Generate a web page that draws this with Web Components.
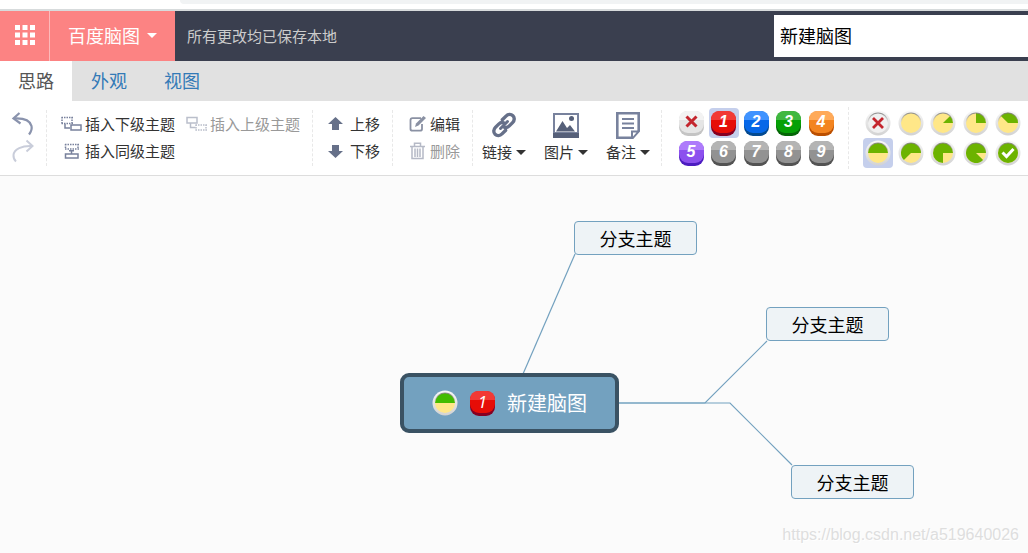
<!DOCTYPE html>
<html lang="zh-CN">
<head>
<meta charset="utf-8">
<title>百度脑图</title>
<style>
html, body { margin: 0; height: 100%; }
body { font-family: "Noto Sans CJK SC", "Liberation Sans", sans-serif; background: #fff; color: #333; }
</style>
</head>
<body>
<mind-app></mind-app>
<script>
const define = (name, render) => customElements.define(name, class extends HTMLElement {
  connectedCallback() {
    if (this.shadowRoot) return;
    const root = this.attachShadow({ mode: 'open' });
    root.innerHTML = typeof render === 'function' ? render(this) : render;
  }
});

const controls = `
  *, *::before, *::after { box-sizing: border-box; }
  button { font: inherit; color: inherit; background: none; border: 0; padding: 0; margin: 0; cursor: pointer; }
  button:disabled { cursor: default; }
`;

/* Icons: [width, height, markup] */
const icons = {
  grid: [20, 20, [0, 7.5, 15].map(y => [0, 7.5, 15].map(x => `<rect x="${x}" y="${y}" width="5" height="5" fill="#fff"/>`).join('')).join('')],
  undo: [24, 26, '<g fill="none" stroke="#8a93ad" stroke-width="2.2"><path d="M8.5 2 2.5 7.500l7 5"/><path d="M3 7.500c9-.5 16 2 17.500 7.500.6 2.500-.2 5.500-2.500 8.500"/></g>'],
  redo: [24, 26, '<g fill="none" stroke="#c9cdda" stroke-width="2"><path d="M15.500 2.500 21.500 8l-6 5.500"/><path d="M21 8C11 7.500 3 11 2.500 17c-.2 3 .8 5 2.500 6.500"/></g>'],
  child: [21, 16, '<g fill="none" stroke="#78819c" stroke-width="1.500"><path d="M.5 1.500H12M.5 7.500H12M1 1v7M11 1v7" stroke-dasharray="1.500 1"/><path d="M4 8v4h5"/><rect x="10" y="9" width="10" height="5"/></g>'],
  parent: [21, 16, '<g fill="none" stroke="#babfcb" stroke-width="1.500"><rect x="1" y="1.500" width="10" height="5.500"/><path d="M4.500 7v4.500h5"/><path d="M9.500 9H21M9.500 14H21M10 8.500v6M20 8.500v6" stroke-dasharray="1.500 1"/></g>'],
  sibling: [21, 16, '<g fill="none" stroke="#78819c" stroke-width="1.500"><path d="M4 1.500h14M4 6h14M4.500 1v5M17 1v5" stroke-dasharray="1.500 1"/><path d="M10.500 7v4M8 7.700h5"/><rect x="4.500" y="11" width="12.500" height="4"/></g>'],
  up: [15, 14, '<path d="M7.500 0 15 7h-4v6H4V7H0z" fill="#667089"/>'],
  down: [15, 14, '<path d="M7.500 14 15 7h-4V1H4v6H0z" fill="#667089"/>'],
  edit: [17, 16, '<path d="M12 2.200H3.500c-1.500 0-2 .7-2 2V13c0 1 .7 1.700 2 1.700H11c1.400 0 2-.7 2-1.700V8" fill="none" stroke="#8a91a3" stroke-width="1.800"/><path d="m6 11 1-3.500L14.500 0 17 2 9.500 9.500z" fill="#8a91a3"/>'],
  trash: [17, 18, '<g fill="none" stroke="#b5b9c6" stroke-width="1.500"><path d="M1 4.500h15M5.500 4V1.200h6V4M3 5v11.500h11V5M6 6.500v8.500M8.500 6.500v8.500M11 6.500v8.500"/></g>'],
  link: [28, 28, '<g fill="none" stroke="#667089" stroke-width="3.400" stroke-linecap="round"><path d="M12.300 8.800 16 5.100c2-2 5-2.200 6.900-.4s1.700 4.900-.3 6.900l-3.300 3.300c-1.600 1.600-3.700 1.900-5.300 1"/><path d="M15.700 19.200 12 22.900c-2 2-5 2.200-6.900.4s-1.700-4.900.3-6.900l3.300-3.300c1.600-1.600 3.700-1.900 5.300-1"/><path d="m10.500 17.500 7-7" stroke-width="3"/></g>'],
  image: [28, 28, '<rect x="1" y="2" width="26" height="25" fill="#78829d"/><rect x="3" y="4" width="22" height="17" fill="#fff"/><path d="M1 22h26v5H1z" fill="#566079"/><path d="M4 20.500 10.500 10l4.500 7 3-3 5 6.500z" fill="#566079"/><circle cx="19.500" cy="7.500" r="2.500" fill="#566079"/>'],
  note: [28, 28, '<path d="M3.300 2.300h21.400V20l-6 6.700H3.300z" fill="#fff" stroke="#78829d" stroke-width="2.600"/><path d="M17 28v-8.500h9z" fill="#78829d"/><path d="M19 21.500h3.500L19 25.500z" fill="#fff"/><path d="M8 8h12M8 12.500h12M8 17h12" stroke="#78829d" stroke-width="2"/>']
};
define('ui-icon', el => {
  const [w, h, art] = icons[el.getAttribute('name')];
  return `<style>:host{display:block;flex:none} svg{display:block}</style>
    <svg width="${w}" height="${h}" viewBox="0 0 ${w} ${h}" aria-hidden="true">${art}</svg>`;
});

define('priority-badge', el => {
  const level = Number(el.getAttribute('level'));
  const palette = [
    ['#f3f3f3', '#e5e5e5', '#c4c4c4'], ['#f23935', '#e60d07', '#850022'], ['#3f93ff', '#0768e8', '#044a91'],
    ['#40b840', '#06a006', '#046606'], ['#ffaa59', '#f38420', '#bb4f00'], ['#ae7bfb', '#8c50ee', '#4c1cc0']
  ];
  const [light, face, base] = palette[level] || ['#b4b4b4', '#929292', '#535353'];
  const mark = level === 0
    ? '<svg width="13" height="13" viewBox="0 0 13 13" aria-hidden="true"><path d="m1.500 1.500 10 10m0-10-10 10" stroke="#c4262e" stroke-width="3"/></svg>'
    : level;
  return `<style>
    :host { display: block; width: 25px; height: 25px; }
    .base { height: 100%; border-radius: 9px; background: ${base}; }
    .face { height: 22px; border-radius: 8px 8px 9px 9px; display: grid; place-items: center; color: #fff;
      background: linear-gradient(${light} 0 9px, ${face} 9px);
      font: italic var(--digit-weight, bold) 16px/22px var(--digit-font, "Liberation Sans"), sans-serif; }
    svg { display: block; }
  </style><div class="base"><div class="face">${mark}</div></div>`;
});

let serial = 0;
define('progress-badge', el => {
  const eighths = Number(el.getAttribute('eighths'));
  const green = el.getAttribute('tone') || '#6cb300';
  const id = 'rim' + serial++;
  const angle = eighths * Math.PI / 4;
  const pie = eighths === 8 ? `<circle cx="13" cy="13" r="10" fill="${green}"/>`
    : eighths > 0 ? `<path d="M13 13h10A10 10 0 ${eighths > 4 ? 1 : 0} 0 ${13 + 10 * Math.cos(angle)} ${13 - 10 * Math.sin(angle)}z" fill="${green}"/>` : '';
  const mark = el.hasAttribute('clear') ? '<path d="m8 8 10 10m0-10-10 10" stroke="#c4262e" stroke-width="2.800"/>'
    : eighths === 8 ? '<path d="m7.500 12.500 4 4 7-7.500" fill="none" stroke="#fff" stroke-width="3"/>' : '';
  return `<style>:host{display:block;width:26px;height:26px} svg{display:block}</style>
    <svg width="26" height="26" viewBox="0 0 26 26" aria-hidden="true">
      <defs><linearGradient id="${id}" x2="0" y2="1"><stop stop-color="#f8f8f8"/><stop offset="1" stop-color="#d2d2d2"/></linearGradient>
      <linearGradient id="${id}s" x2="0" y2="1"><stop stop-color="#777" stop-opacity=".8"/><stop offset=".5" stop-color="#999" stop-opacity="0"/></linearGradient></defs>
      <circle cx="13" cy="13" r="12.500" fill="url(#${id})"/>
      <circle cx="13" cy="13" r="10" fill="${el.hasAttribute('clear') ? '#f0f0f0' : '#ffe788'}"/>${pie}
      <circle cx="13" cy="13" r="10" fill="none" stroke="url(#${id}s)" stroke-width="1.200"/>${mark}
    </svg>`;
});

define('tool-group', `<style>
  :host { display: grid; flex: none; box-sizing: border-box; height: 56px; align-content: center;
    border-right: 1px dashed #e8e8e8; }
</style><slot></slot>`);

define('tool-button', el => `<style>${controls}
  :host { display: block; }
  button { display: flex; align-items: center; gap: var(--gap, 3px); height: 27px; font-size: 15px; line-height: 27px; white-space: nowrap; }
  button:disabled { color: #999; }
</style><button type="button" ${el.hasAttribute('disabled') ? 'disabled' : ''}${el.hasAttribute('hint') ? ` aria-label="${el.getAttribute('hint')}"` : ''}><ui-icon name="${el.getAttribute('icon')}"></ui-icon><slot></slot></button>`);

define('drop-button', el => `<style>${controls}
  :host { display: block; width: 62px; }
  button { width: 100%; display: grid; justify-items: center; font-size: 15px; line-height: 26px; }
  .label { display: flex; align-items: center; gap: 4px; white-space: nowrap; }
  .label::after { content: ""; border: 5px solid transparent; border-top-color: #333; border-bottom: 0; }
</style><button type="button" aria-haspopup="menu"><ui-icon name="${el.getAttribute('icon')}"></ui-icon><span class="label"><slot></slot></span></button>`);

define('badge-picker', el => {
  const priority = el.getAttribute('kind') === 'priority';
  const chosen = Number(el.getAttribute('selected'));
  const cells = Array.from({ length: 10 }, (_, i) => `<button type="button" aria-label="${priority ? '优先级' : '进度'} ${i}" aria-pressed="${i === chosen}">${
    priority ? `<priority-badge level="${i}"></priority-badge>`
      : `<progress-badge eighths="${Math.max(0, i - 1)}" ${i === 0 ? 'clear' : ''}></progress-badge>`}</button>`);
  return `<style>${controls}
    :host { display: grid; grid-template-columns: repeat(5, 30px); justify-content: space-between; width: 160px; }
    button { height: 30px; display: grid; place-items: center; border-radius: 4px; }
    button[aria-pressed="true"] { background: #c5cfec; }
  </style>${cells.join('')}`;
});

define('page-top', `<style>
  :host { display: block; height: 11px; box-sizing: border-box; border-bottom: 2px solid #d7dbdc; background: #fff; padding-left: 180px; }
  div { height: 4px; background: #f1f3f4; border-bottom-left-radius: 8px; }
</style><div></div>`);

define('app-header', `<style>${controls}
  :host { display: flex; align-items: center; height: 50px; background: #3a3f4f; color: #fff; }
  .apps, .brand { height: 100%; background: #fc8383; display: flex; align-items: center; justify-content: center; flex: none; padding-bottom: 2px; }
  .apps { width: 50px; border-right: 1px solid #fdb9b9; }
  .brand { width: 125px; gap: 7px; font-size: 18px; }
  .brand::after { content: ""; border: 5px solid transparent; border-top-color: #fff; border-bottom: 0; }
  .status { flex: 1; padding: 0 0 2px 12px; font-size: 15px; color: #ccc; white-space: nowrap; }
  input { flex: 0 0 254px; height: 42px; border: 0; border-radius: 0; padding: 0 6px 2px; font: inherit; font-size: 18px; color: #000; background: #fff; outline: 0; }
</style>
<button class="apps" type="button" aria-label="应用"><ui-icon name="grid"></ui-icon></button>
<button class="brand" type="button" aria-haspopup="menu">百度脑图</button>
<span class="status">所有更改均已保存本地</span>
<input type="text" value="新建脑图" aria-label="标题">`);

define('tab-bar', `<style>
  :host { display: flex; gap: 1px; height: 40px; background: #e1e1e1; font-size: 18px; line-height: 38px; }
  a { padding: 0 18px 2px; color: #337ab7; text-decoration: none; }
  a[aria-current] { background: #fff; color: #555; }
</style>
<a href="#idea" aria-current="page">思路</a><a href="#look">外观</a><a href="#view">视图</a>`);

define('tool-bar', `<style>
  :host { display: flex; align-items: center; height: 75px; box-sizing: border-box; border-bottom: 1px solid #ddd; background: #fff; overflow: hidden; }
  .history { padding: 0 11px 2px; }
  .insert { grid-template-columns: auto auto; column-gap: 11px; padding: 0 12px 2px 14px; }
  .move { padding: 0 12px 2px 15px; --gap: 7px; }
  .modify { padding: 0 12px 2px 16px; --gap: 4px; }
  .attach { grid-template-columns: repeat(3, auto); padding: 0 2px 0 0; }
  .priority { height: 62px; padding: 0 12px 0 14px; }
  .progress { height: 62px; padding: 0 5px 0 14px; border: 0; }
</style>
<tool-group class="history"><tool-button icon="undo" hint="撤销"></tool-button><tool-button icon="redo" hint="重做" disabled></tool-button></tool-group>
<tool-group class="insert"><tool-button icon="child">插入下级主题</tool-button><tool-button icon="parent" disabled>插入上级主题</tool-button><tool-button icon="sibling">插入同级主题</tool-button></tool-group>
<tool-group class="move"><tool-button icon="up">上移</tool-button><tool-button icon="down">下移</tool-button></tool-group>
<tool-group class="modify"><tool-button icon="edit">编辑</tool-button><tool-button icon="trash" disabled>删除</tool-button></tool-group>
<tool-group class="attach"><drop-button icon="link">链接</drop-button><drop-button icon="image">图片</drop-button><drop-button icon="note">备注</drop-button></tool-group>
<tool-group class="priority"><badge-picker kind="priority" selected="1"></badge-picker></tool-group>
<tool-group class="progress"><badge-picker kind="progress" selected="5"></badge-picker></tool-group>`);

define('map-node', `<style>
  :host { position: absolute; box-sizing: border-box; display: flex; align-items: center; justify-content: center;
    width: 123px; height: 34px; border: 1px solid #73a1bf; border-radius: 4px; background: #eef3f6; color: #000;
    font-size: 18px; line-height: 32px; white-space: nowrap; }
  :host([root]) { width: 219px; height: 60px; gap: 12px; border: 4px solid #3a5263; border-radius: 9px;
    background: #73a1bf; color: #fff; font-size: 20px; --digit-weight: normal; --digit-font: "Noto Sans"; }
</style><slot name="badges"></slot><slot></slot>`);

define('mind-map', `<style>
  :host { display: block; position: relative; flex: 1; overflow: hidden; background: #fbfbfb; }
  svg { position: absolute; left: 0; top: 0; overflow: visible; }
  .mark { position: absolute; right: 9px; bottom: 8px; font: 16px/20px "Liberation Sans", sans-serif; color: #dedede; text-shadow: 1px 1px 0 #fff; }
</style>
<svg width="1" height="1" aria-hidden="true"><g fill="none" stroke="#73a1bf" stroke-width="1.200">
  <path d="M523 198 575 78"/><path d="M618 227h87l62-62"/><path d="M618 227h112l62 62"/></g></svg>
<map-node style="left:574px;top:45px">分支主题</map-node>
<map-node style="left:766px;top:131px">分支主题</map-node>
<map-node style="left:791px;top:289px">分支主题</map-node>
<map-node root style="left:400px;top:197px"><progress-badge slot="badges" eighths="4" tone="#43bc00"></progress-badge><priority-badge slot="badges" level="1"></priority-badge>新建脑图</map-node>
<span class="mark">https://blog.csdn.net/a519640026</span>`);

define('mind-app', `<style>
  :host { display: flex; flex-direction: column; min-height: 100vh; }
</style><page-top></page-top><app-header></app-header><tab-bar></tab-bar><tool-bar></tool-bar><mind-map></mind-map>`);
</script>
</body>
</html>
